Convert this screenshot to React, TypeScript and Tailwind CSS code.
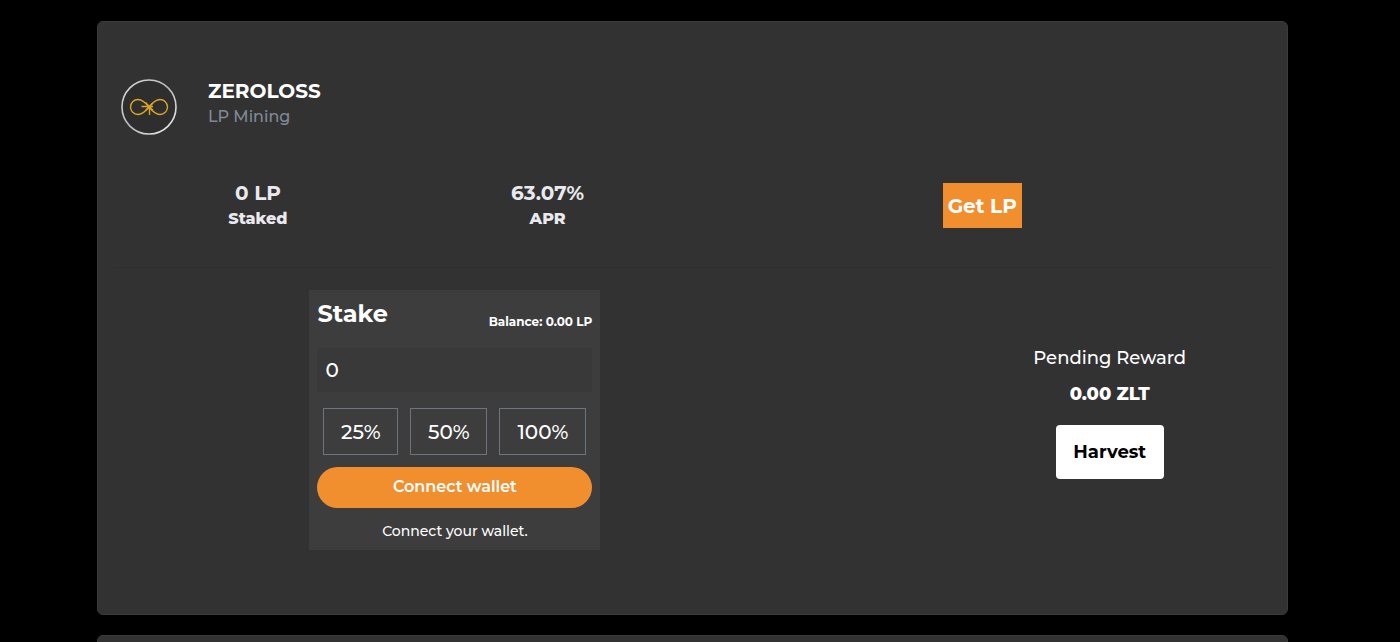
import { useState } from 'react';

const presets = [
  { label: '25%', width: 'w-[75px]' },
  { label: '50%', width: 'w-[77px]' },
  { label: '100%', width: 'w-[87px]' },
];

function TokenLogo() {
  return (
    <svg className="h-14 w-14" viewBox="0 0 56 56" fill="none" aria-hidden="true">
      <defs>
        <linearGradient id="ring" x1="0" y1="0" x2="1" y2="1">
          <stop offset="0" stopColor="#dcdcdc" />
          <stop offset="0.5" stopColor="#b8b8b8" />
          <stop offset="1" stopColor="#f2f2f2" />
        </linearGradient>
      </defs>
      <circle cx="28" cy="28" r="27" fill="#2e2e2e" stroke="url(#ring)" strokeWidth="1.6" />
      <path
        d="M28 28C24 23 20 20.5 17 20.5a7.5 7.5 0 0 0 0 15C20 35.5 24 33 28 28ZM28 28C32 23 36 20.5 39 20.5a7.5 7.5 0 0 1 0 15C36 35.5 32 33 28 28Z"
        stroke="#dba524"
        strokeWidth="1.4"
      />
      <path d="M20.5 27.5H32M28.5 27V36M24.5 23.5L32 31.5M32 24L24.5 31.5" stroke="#dba524" strokeWidth="1.4" />
    </svg>
  );
}

interface StatProps {
  value: string;
  label: string;
}

function Stat({ value, label }: StatProps) {
  return (
    <div className="text-center text-[#e9e9ee]">
      <p className="text-xl leading-7 font-bold">{value}</p>
      <p className="text-base leading-6 font-extrabold">{label}</p>
    </div>
  );
}

function StakePanel() {
  const [amount, setAmount] = useState('0');

  return (
    <section className="w-[291px] bg-[#3d3d3d] px-2 pb-2">
      <div className="flex h-[58px] items-start justify-between">
        <h3 className="pt-2 text-2xl leading-8 font-bold">Stake</h3>
        <span className="pt-6 text-xs leading-4 font-bold">Balance: 0.00 LP</span>
      </div>
      <input
        type="text"
        aria-label="Stake amount"
        value={amount}
        onChange={(e) => setAmount(e.target.value)}
        className="block h-11 w-full bg-[#393939] px-2 text-xl font-medium outline-none"
      />
      <div className="mt-4 flex justify-center gap-3">
        {presets.map((preset) => (
          <button
            key={preset.label}
            type="button"
            className={`h-[47px] border border-[#6c757d] text-xl font-medium ${preset.width}`}
          >
            {preset.label}
          </button>
        ))}
      </div>
      <button type="button" className="mt-3 h-[41px] w-full rounded-full bg-[#f18f2f] pb-px text-base font-semibold">
        Connect wallet
      </button>
      <p className="mt-3 text-center text-sm leading-[22px] font-medium">Connect your wallet.</p>
    </section>
  );
}

export default function App() {
  return (
    <main className="h-screen overflow-hidden bg-black pt-[21px] pr-28 pl-[97px] font-['Montserrat','Inter',sans-serif] text-white">
      <article className="rounded-md border border-[#3a3a3a] bg-[#323232] px-[15px] pt-14 pb-16">
        <header className="flex items-end gap-[31px] pt-px pl-2">
          <TokenLogo />
          <div className="h-14">
            <h2 className="text-xl leading-6 font-bold">ZEROLOSS</h2>
            <p className="text-base leading-7 font-medium text-[#818a98]">LP Mining</p>
          </div>
        </header>

        <div className="mt-11 grid grid-cols-4 pb-9">
          <Stat value="0 LP" label="Staked" />
          <Stat value="63.07%" label="APR" />
          <div className="col-span-2 flex justify-center pt-1">
            <a href="#get-lp" className="flex h-[45px] w-[79px] items-center justify-center bg-[#f18f2f] text-xl font-bold">
              Get LP
            </a>
          </div>
        </div>

        <hr className="border-[#2f2f2f]" />

        <div className="grid grid-cols-[59%_28%] justify-between pt-[22px]">
          <div className="flex justify-center">
            <StakePanel />
          </div>
          <div className="flex flex-col items-center pt-[54px]">
            <p className="text-lg leading-7 font-medium">Pending Reward</p>
            <p className="mt-2 text-lg leading-7 font-extrabold">0.00 ZLT</p>
            <button type="button" className="mt-[17px] h-[54px] w-[108px] rounded bg-white text-lg font-bold text-black">
              Harvest
            </button>
          </div>
        </div>
      </article>

      <article className="mt-5 h-40 rounded-md border border-[#3a3a3a] bg-[#323232]" />
    </main>
  );
}
